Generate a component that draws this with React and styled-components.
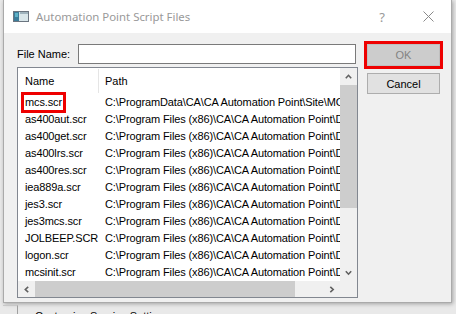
import React from "react";
import styled, { createGlobalStyle } from "styled-components";

const Global = createGlobalStyle`
  html, body { margin: 0; padding: 0; }
  body {
    background: #f0f0f0;
    width: 456px;
    height: 314px;
    overflow: hidden;
    font-family: "Liberation Sans", Arial, sans-serif;
  }
`;

const Desktop = styled.div`
  width: 456px;
  height: 314px;
  overflow: hidden;
  box-sizing: border-box;
  padding-left: 3px;
  background: #e9e9e9;
  display: flex;
  flex-direction: column;
`;

const Dialog = styled.div`
  width: 449px;
  height: 303px;
  flex-shrink: 0;
  box-sizing: border-box;
  border: 1px solid #aaaaaa;
  border-top: none;
  background: #f0f0f0;
  display: flex;
  flex-direction: column;
  box-shadow: 1px 1px 4px rgba(0, 0, 0, 0.3);
`;

const TitleBar = styled.div`
  height: 33px;
  flex-shrink: 0;
  background: #ffffff;
  display: flex;
  align-items: center;
  padding-left: 9px;
`;

const TitleText = styled.span`
  margin-left: 7px;
  font-family: "Noto Sans", "Open Sans", sans-serif;
  font-size: 11.4px;
  color: #999999;
  flex: 1;
  white-space: nowrap;
`;

const CaptionButton = styled.div`
  width: 46px;
  height: 33px;
  display: flex;
  align-items: center;
  justify-content: center;
  color: #999999;
  font-family: "Noto Sans", sans-serif;
  font-size: 13px;
`;

const Body = styled.div`
  flex: 1;
  display: grid;
  grid-template-columns: 341px 73px;
  column-gap: 9px;
  padding: 11px 0 0 13px;
`;

const LeftCol = styled.div`
  display: flex;
  flex-direction: column;
  gap: 3px;
`;

const InputRow = styled.div`
  display: flex;
  align-items: center;
  height: 20px;
`;

const Label = styled.label`
  width: 61px;
  font-size: 11px;
  color: #000;
  white-space: nowrap;
`;

const TextInput = styled.div`
  width: 278px;
  height: 20px;
  box-sizing: border-box;
  border: 1px solid #7a7a7a;
  background: #ffffff;
`;

const ListView = styled.div`
  width: 341px;
  height: 231px;
  box-sizing: border-box;
  border: 1px solid #828790;
  background: #ffffff;
  display: grid;
  grid-template-columns: 322px 17px;
  grid-template-rows: 213px 16px;
`;

const ListContent = styled.div`
  overflow: hidden;
  display: flex;
  flex-direction: column;
`;

const HeaderRow = styled.div`
  height: 26px;
  display: flex;
  align-items: center;
  flex-shrink: 0;
`;

const HeaderCell = styled.div`
  box-sizing: border-box;
  height: 24px;
  display: flex;
  align-items: center;
  font-size: 11px;
  color: #000;
  white-space: nowrap;
  width: ${(p) => (p.$first ? "81px" : "auto")};
  flex: ${(p) => (p.$first ? "none" : "1")};
  padding-left: ${(p) => (p.$first ? "7px" : "6px")};
  border-right: ${(p) => (p.$first ? "1px solid #e5e5e5" : "none")};
`;

const Row = styled.div`
  height: 17px;
  display: flex;
  align-items: center;
  flex-shrink: 0;
  font-size: 11px;
  line-height: 17px;
  letter-spacing: -0.12px;
  color: #000;
  white-space: nowrap;
`;

const NameCell = styled.div`
  width: 81px;
  flex-shrink: 0;
  padding-left: 7px;
  box-sizing: border-box;
  overflow: visible;
`;

const PathCell = styled.div`
  flex: 1;
  min-width: 0;
  padding-left: 6px;
  overflow: hidden;
`;

const Marked = styled.span`
  position: relative;
  display: inline-block;
  &::after {
    content: "";
    position: absolute;
    left: -4px;
    right: -4px;
    top: -2px;
    bottom: -2px;
    border: 3px solid #ee0000;
  }
`;

const VScroll = styled.div`
  background: #f0f0f0;
  display: flex;
  flex-direction: column;
`;

const HScroll = styled.div`
  background: #f0f0f0;
  display: flex;
`;

const Corner = styled.div`
  background: #f0f0f0;
`;

const ArrowBox = styled.div`
  width: 17px;
  height: ${(p) => (p.$h ? "16px" : "17px")};
  flex-shrink: 0;
  display: flex;
  align-items: center;
  justify-content: center;
`;

const Thumb = styled.div`
  background: #cdcdcd;
  flex-shrink: 0;
  width: ${(p) => (p.$h ? `${p.$len}px` : "17px")};
  height: ${(p) => (p.$h ? "16px" : `${p.$len}px`)};
`;

const Track = styled.div`
  flex: 1;
`;

const RightCol = styled.div`
  display: flex;
  flex-direction: column;
  gap: 7px;
`;

const Button = styled.div`
  width: 73px;
  height: ${(p) => (p.$ok ? "22px" : "21px")};
  box-sizing: border-box;
  border: 1px solid ${(p) => (p.$disabled ? "#bfbfbf" : "#adadad")};
  background: ${(p) => (p.$disabled ? "#cccccc" : "#e1e1e1")};
  color: ${(p) => (p.$disabled ? "#838383" : "#000000")};
  font-size: 11px;
  display: flex;
  align-items: center;
  justify-content: center;
  outline: ${(p) => (p.$marked ? "3px solid #ee0000" : "none")};
`;

const BottomStrip = styled.div`
  flex: 1;
  display: flex;
  padding-top: 2px;
`;

const StripLeft = styled.div`
  width: 14px;
  border-right: 1px solid #a0a0a0;
  border-top: 1px solid #c8c8c8;
`;

const StripText = styled.div`
  padding: 5px 0 0 17px;
  font-size: 11px;
  line-height: 13px;
  color: #000;
  white-space: nowrap;
`;

const Chevron = ({ dir }) => {
  const pts = {
    up: "0.8,4.2 3.5,1.3 6.2,4.2",
    down: "0.8,1.3 3.5,4.2 6.2,1.3",
    left: "4.2,0.8 1.3,3.5 4.2,6.2",
    right: "1.3,0.8 4.2,3.5 1.3,6.2",
  }[dir];
  const vertical = dir === "up" || dir === "down";
  return (
    <svg width={vertical ? 7 : 6} height={vertical ? 6 : 7} viewBox={vertical ? "0 0 7 6" : "0 0 6 7"}>
      <polyline points={pts} fill="none" stroke="#606060" strokeWidth="1.6" />
    </svg>
  );
};

const AppIcon = () => (
  <svg width="16" height="11" viewBox="0 0 16 11">
    <rect x="0" y="0" width="16" height="11" fill="#6b7580" />
    <rect x="1" y="1" width="14" height="9" fill="#d9e6ea" />
    <rect x="1" y="1" width="5" height="9" fill="#3c7d9a" />
    <rect x="2" y="2" width="3" height="4" fill="#5fb2c7" />
    <rect x="7" y="1" width="8" height="2" fill="#9fb3bd" />
  </svg>
);

const rows = [
  ["mcs.scr", "C:\\ProgramData\\CA\\CA Automation Point\\Site\\MCS\\mcs.scr", true],
  ["as400aut.scr", "C:\\Program Files (x86)\\CA\\CA Automation Point\\Demo\\as400aut.scr"],
  ["as400get.scr", "C:\\Program Files (x86)\\CA\\CA Automation Point\\Demo\\as400get.scr"],
  ["as400lrs.scr", "C:\\Program Files (x86)\\CA\\CA Automation Point\\Demo\\as400lrs.scr"],
  ["as400res.scr", "C:\\Program Files (x86)\\CA\\CA Automation Point\\Demo\\as400res.scr"],
  ["iea889a.scr", "C:\\Program Files (x86)\\CA\\CA Automation Point\\Demo\\iea889a.scr"],
  ["jes3.scr", "C:\\Program Files (x86)\\CA\\CA Automation Point\\Demo\\jes3.scr"],
  ["jes3mcs.scr", "C:\\Program Files (x86)\\CA\\CA Automation Point\\Demo\\jes3mcs.scr"],
  ["JOLBEEP.SCR", "C:\\Program Files (x86)\\CA\\CA Automation Point\\Demo\\JOLBEEP.SCR"],
  ["logon.scr", "C:\\Program Files (x86)\\CA\\CA Automation Point\\Demo\\logon.scr"],
  ["mcsinit.scr", "C:\\Program Files (x86)\\CA\\CA Automation Point\\Demo\\mcsinit.scr"],
];

export default function App() {
  return (
    <>
      <Global />
      <Desktop>
        <Dialog>
          <TitleBar>
            <AppIcon />
            <TitleText>Automation Point Script Files</TitleText>
            <CaptionButton>?</CaptionButton>
            <CaptionButton>
              <svg width="11" height="11" viewBox="0 0 11 11">
                <path d="M0.5 0.5 L10.5 10.5 M10.5 0.5 L0.5 10.5" stroke="#8a8a8a" strokeWidth="1" fill="none" />
              </svg>
            </CaptionButton>
          </TitleBar>
          <Body>
            <LeftCol>
              <InputRow>
                <Label>File Name:</Label>
                <TextInput />
              </InputRow>
              <ListView>
                <ListContent>
                  <HeaderRow>
                    <HeaderCell $first>Name</HeaderCell>
                    <HeaderCell>Path</HeaderCell>
                  </HeaderRow>
                  {rows.map(([name, path, marked]) => (
                    <Row key={name}>
                      <NameCell>{marked ? <Marked>{name}</Marked> : name}</NameCell>
                      <PathCell>{path}</PathCell>
                    </Row>
                  ))}
                </ListContent>
                <VScroll>
                  <ArrowBox><Chevron dir="up" /></ArrowBox>
                  <Thumb $len={123} />
                  <Track />
                  <ArrowBox><Chevron dir="down" /></ArrowBox>
                </VScroll>
                <HScroll>
                  <ArrowBox $h><Chevron dir="left" /></ArrowBox>
                  <Thumb $h $len={260} />
                  <Track />
                  <ArrowBox $h><Chevron dir="right" /></ArrowBox>
                </HScroll>
                <Corner />
              </ListView>
            </LeftCol>
            <RightCol>
              <Button $ok $disabled $marked>OK</Button>
              <Button>Cancel</Button>
            </RightCol>
          </Body>
        </Dialog>
        <BottomStrip>
          <StripLeft />
          <StripText>Customize Service Settings</StripText>
        </BottomStrip>
      </Desktop>
    </>
  );
}
